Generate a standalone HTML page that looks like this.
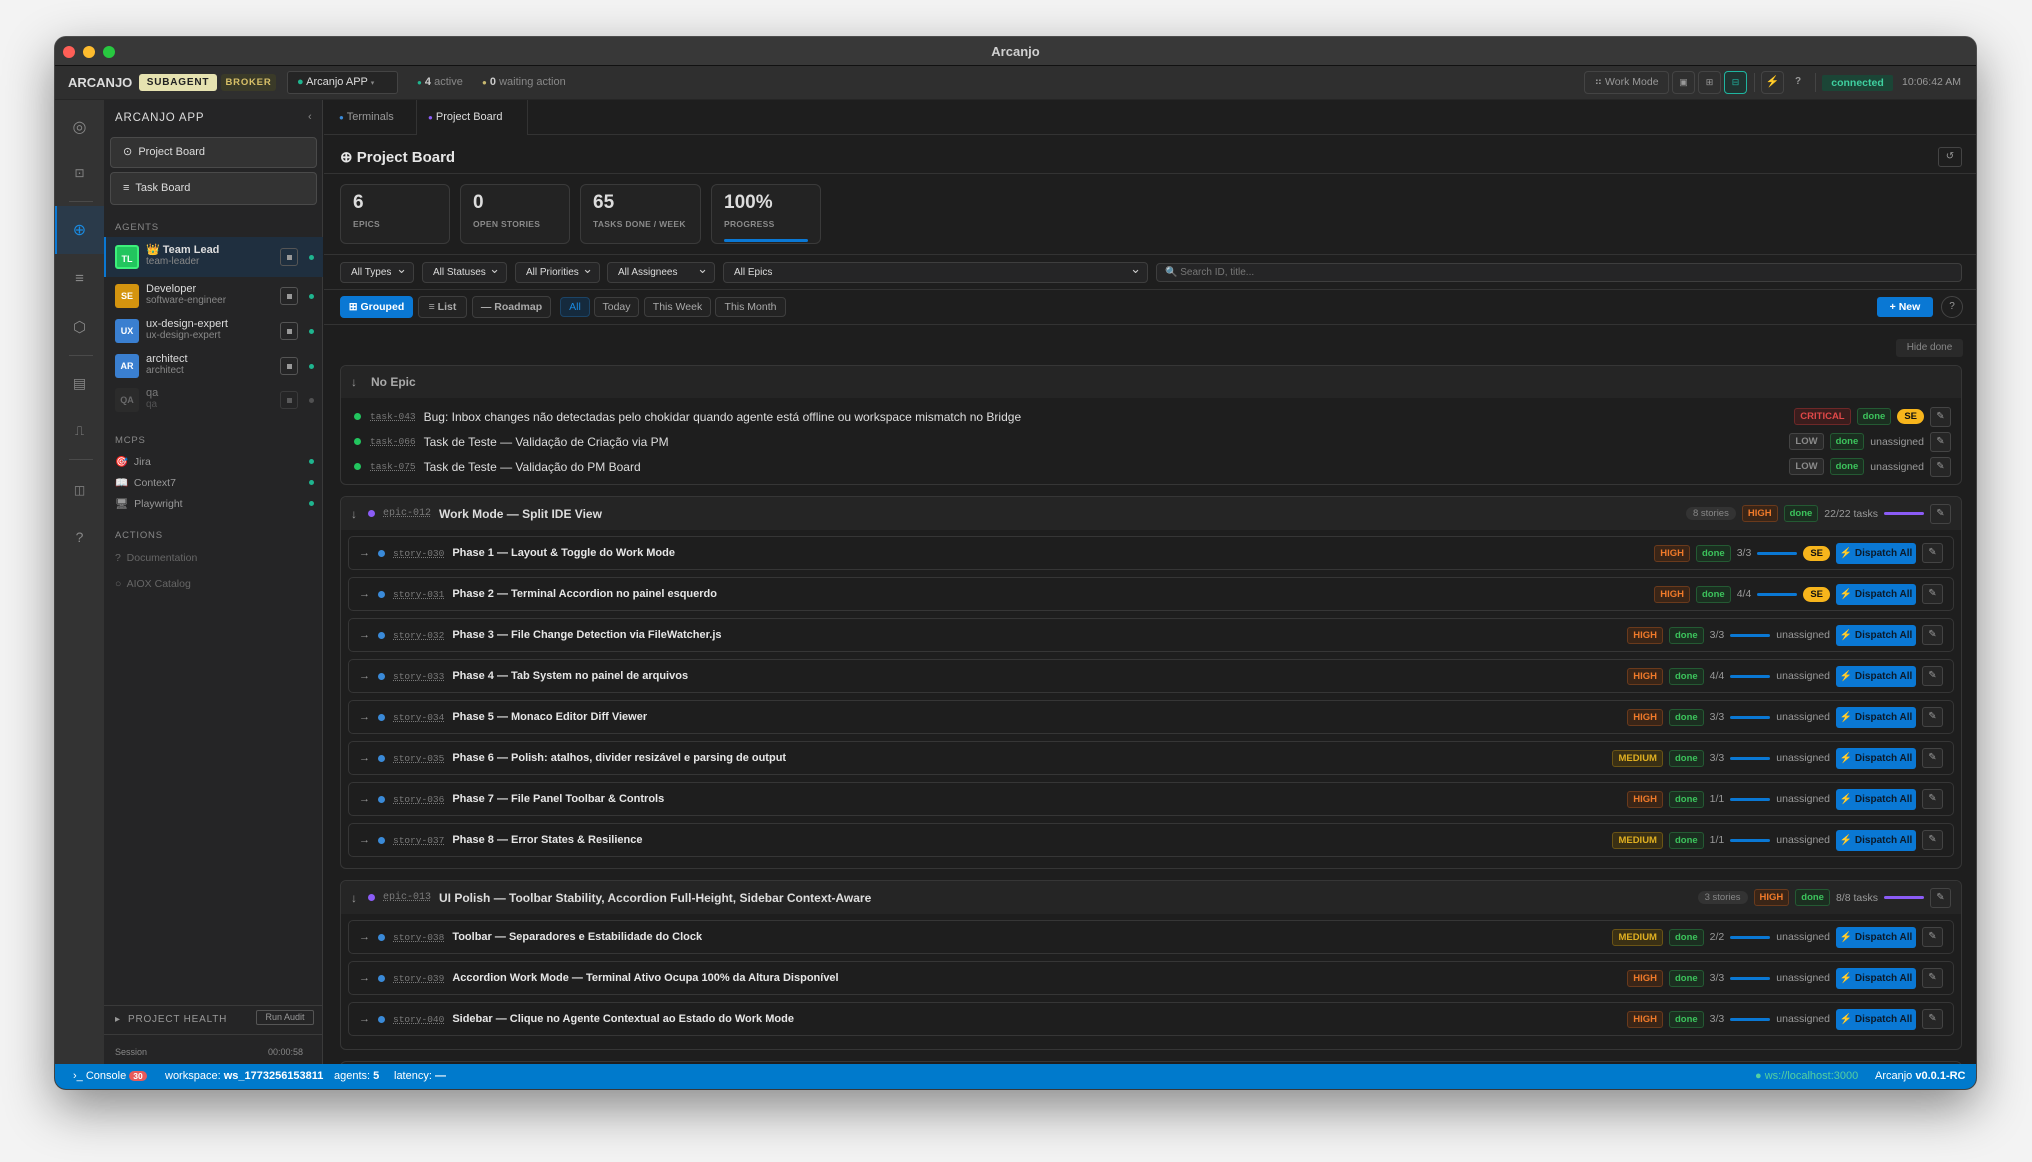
<!DOCTYPE html>
<html><head><meta charset="utf-8"><style>
*{box-sizing:border-box;margin:0;padding:0}
body{width:2032px;height:1162px;background:#f3f3f3;font-family:"Liberation Sans",sans-serif;position:relative;overflow:hidden;color:#ccc}
.win{position:absolute;left:55px;top:37px;width:1921px;height:1052px;border-radius:11px;overflow:hidden;background:#1e1e1e;box-shadow:0 18px 50px rgba(0,0,0,.45),0 0 0 1px #555}
.abs{position:absolute}
.title{left:0;top:0;width:100%;height:29px;background:#383838;border-bottom:1px solid #111;text-align:center;font-size:13px;font-weight:bold;line-height:29px;color:#d0d0d0}
.tl{position:absolute;top:9px;width:12px;height:12px;border-radius:50%}
.tb{left:0;top:29px;width:100%;height:34px;background:#2f2f2f;border-bottom:1px solid #262626;font-size:11px}
.rail{left:0;top:63px;width:49px;height:964px;background:#333}
.side{left:49px;top:63px;width:219px;height:964px;background:#252526;border-right:1px solid #3a3a3a}
.main{left:269px;top:63px;width:1652px;height:964px;background:#1e1e1e;overflow:hidden}
.status{left:0;top:1027px;width:100%;height:25px;background:#007acc;color:#fff;font-size:11px}
.pill{display:inline-block;border-radius:3px;font-size:9.5px;font-weight:bold;padding:0 5px;line-height:15px;border:1px solid}
.hi{color:#f07a2a;border-color:#6a3a1c;background:#3a2517}
.med{color:#e0b021;border-color:#6a5415;background:#3a3014}
.crit{color:#e04848;border-color:#6e2828;background:#3a1d1d}
.low{color:#8a8a8a;border-color:#444;background:#2a2a2a}
.done{color:#3cc35c;border-color:#245a33;background:#1b2e20}
.se{display:inline-block;background:#f7b51c;color:#111;border-radius:8px;font-size:9.5px;font-weight:bold;padding:0 7px;line-height:15px}
.ed{display:inline-block;width:21px;height:20px;border:1px solid #444;border-radius:3px;text-align:center;font-size:10px;line-height:18px;color:#999;background:#262626}
.disp{display:inline-block;width:80px;height:21px;background:#0a78d4;color:#0b1a2a;border-radius:3px;font-size:10px;font-weight:bold;line-height:21px;text-align:center}
.bar{display:inline-block;width:40px;height:3px;border-radius:2px;background:#0a78d4;vertical-align:middle}
.group{position:absolute;left:16px;width:1622px;border:1px solid #363636;border-radius:6px;background:#1e1e1e;overflow:hidden}
.gh{height:33px;background:#252525;display:flex;align-items:center;font-size:12px;font-weight:bold;color:#ddd;padding-left:10px}
.story{margin:6px 7px 7px 7px;height:34px;border:1px solid #363636;border-radius:5px;display:flex;align-items:center;font-size:11px;padding-left:10px}
.story+.story{margin-top:0}
.id{color:#7a7a7a;text-decoration:underline dotted;font-family:"Liberation Mono",monospace;font-size:9.5px;margin-right:8px;font-weight:normal}
.dot{display:inline-block;width:7px;height:7px;border-radius:50%;margin-right:8px}
.r{margin-left:auto;display:flex;align-items:center;gap:6px;padding-right:10px;font-size:10.5px;color:#9a9a9a;font-weight:normal}
.st{font-weight:bold;color:#e6e6e6}
.sel{position:absolute;top:162px;height:21px;border:1px solid #3e3e3e;border-radius:4px;background:#252526;font-size:10px;color:#ddd;line-height:19px;padding-left:10px}
.sel:after{content:"⌄";position:absolute;right:6px;top:-4px;font-size:13px;color:#ccc}
.vb{position:absolute;top:196px;height:22px;border:1px solid #3e3e3e;border-radius:4px;font-size:10.5px;color:#aaa;line-height:20px;text-align:center;background:#232323}
.card{position:absolute;top:84px;height:60px;border:1px solid #3a3a3a;border-radius:6px;background:#232323;padding:7px 12px}
.card b{display:block;font-size:19px;color:#ddd;line-height:22px}
.card span{font-size:8.5px;font-weight:bold;color:#8a8a8a;letter-spacing:.3px}
.ric{position:absolute;left:0;width:49px;text-align:center;color:#888;font-size:13px}
.ag{position:absolute;left:0;width:219px;height:34px}
.av{position:absolute;left:11px;top:5px;width:24px;height:24px;border-radius:3px;color:#fff;font-size:9px;font-weight:bold;text-align:center;line-height:24px}
.an{position:absolute;left:42px;top:4px;font-size:11px;color:#ddd}
.as{position:absolute;left:42px;top:16px;font-size:10px;color:#888}
.sb{position:absolute;left:176px;top:8px;width:18px;height:18px;border:1px solid #555;border-radius:3px}
.sb:after{content:"";position:absolute;left:6px;top:6px;width:5px;height:5px;background:#999}
.gd{position:absolute;left:205px;top:15px;width:5px;height:5px;border-radius:50%;background:#1fb58f}
.trow{height:25px;display:flex;align-items:center;font-size:12px;padding-left:13px;color:#ddd}
</style></head><body>
<div class="win">
<div class="abs title">Arcanjo
<span class="tl" style="left:8px;background:#ff5f57"></span><span class="tl" style="left:28px;background:#febc2e"></span><span class="tl" style="left:48px;background:#28c840"></span></div>

<div class="abs tb">
<span class="abs" style="left:13px;top:9px;font-size:13px;font-weight:bold;color:#ddd">ARCANJO</span>
<span class="abs" style="left:84px;top:8px;width:78px;height:17px;background:#e6e2b0;color:#222;border-radius:3px;font-size:10px;font-weight:bold;text-align:center;line-height:17px;letter-spacing:.8px">SUBAGENT</span>
<span class="abs" style="left:166px;top:8px;width:55px;height:17px;background:#3a3a28;color:#d8c068;border-radius:3px;font-size:9.5px;font-weight:bold;text-align:center;line-height:17px;letter-spacing:.8px">BROKER</span>
<span class="abs" style="left:232px;top:5px;width:111px;height:23px;border:1px solid #444;background:#252525;border-radius:3px;font-size:11px;color:#ddd;line-height:21px;padding-left:9px"><span style="color:#1fb58f">●</span> Arcanjo APP <span style="font-size:7px;color:#888">▾</span></span>
<span class="abs" style="left:362px;top:10px;color:#888"><span style="color:#1fb58f;font-size:8px">●</span> <b style="color:#ccc">4</b> active</span>
<span class="abs" style="left:427px;top:10px;color:#888"><span style="color:#c8b870;font-size:8px">●</span> <b style="color:#ccc">0</b> waiting action</span>
<span class="abs" style="left:1529px;top:5px;width:85px;height:23px;border:1px solid #444;border-radius:4px;font-size:10.5px;color:#999;line-height:21px;text-align:center">⠶ Work Mode</span>
<span class="abs" style="left:1617px;top:5px;width:23px;height:23px;border:1px solid #444;border-radius:4px;color:#999;font-size:9px;text-align:center;line-height:21px">▣</span>
<span class="abs" style="left:1643px;top:5px;width:23px;height:23px;border:1px solid #444;border-radius:4px;color:#999;font-size:9px;text-align:center;line-height:21px">⊞</span>
<span class="abs" style="left:1669px;top:5px;width:23px;height:23px;border:1px solid #1fb5a0;border-radius:4px;color:#1fb5a0;font-size:9px;text-align:center;line-height:21px;background:#203330">⊟</span>
<span class="abs" style="left:1699px;top:7px;width:1px;height:19px;background:#444"></span>
<span class="abs" style="left:1706px;top:5px;width:23px;height:23px;border:1px solid #444;border-radius:4px;color:#f7b51c;font-size:11px;text-align:center;line-height:21px">⚡</span>
<span class="abs" style="left:1740px;top:10px;color:#999;font-size:10px;font-weight:bold">?</span>
<span class="abs" style="left:1760px;top:7px;width:1px;height:19px;background:#444"></span>
<span class="abs" style="left:1767px;top:9px;width:71px;height:16px;background:#1b4536;color:#3fd0a0;font-weight:bold;font-size:10.5px;text-align:center;line-height:16px;border-radius:2px">connected</span>
<span class="abs" style="left:1847px;top:10px;color:#999;font-size:10.5px">10:06:42 AM</span>
</div>

<div class="abs rail">
<div class="ric" style="top:17px;font-size:16px">◎</div>
<div class="ric" style="top:66px;font-size:12px">⊡</div>
<div class="abs" style="left:14px;top:101px;width:24px;height:1px;background:#4a4a4a"></div>
<div class="abs" style="left:0;top:106px;width:49px;height:48px;background:#2a3a4a;border-left:2px solid #0a78d4"></div>
<div class="ric" style="top:120px;color:#1a8ae0;font-size:16px">⊕</div>
<div class="ric" style="top:170px;font-size:15px">≡</div>
<div class="ric" style="top:218px;font-size:15px">⬡</div>
<div class="abs" style="left:14px;top:255px;width:24px;height:1px;background:#4a4a4a"></div>
<div class="ric" style="top:275px;font-size:14px">▤</div>
<div class="ric" style="top:323px;font-size:13px">⎍</div>
<div class="abs" style="left:14px;top:359px;width:24px;height:1px;background:#4a4a4a"></div>
<div class="ric" style="top:383px;font-size:12px">◫</div>
<div class="ric" style="top:429px;font-size:14px">?</div>
</div>

<div class="abs side">
<span class="abs" style="left:11px;top:12px;font-size:11.5px;letter-spacing:.8px;color:#ddd">ARCANJO APP</span>
<span class="abs" style="left:204px;top:11px;color:#888;font-size:11px">‹</span>
<div class="abs" style="left:6px;top:37px;width:207px;height:31px;border:1px solid #4a4a4a;border-radius:4px;background:#333;font-size:11px;color:#ddd;line-height:29px;padding-left:12px">⊙&nbsp; Project Board</div>
<div class="abs" style="left:6px;top:72px;width:207px;height:33px;border:1px solid #4a4a4a;border-radius:4px;background:#333;font-size:11px;color:#ddd;line-height:31px;padding-left:12px">≡&nbsp; Task Board</div>
<span class="abs" style="left:11px;top:122px;font-size:9.5px;letter-spacing:.8px;color:#888">AGENTS</span>
<div class="ag" style="top:137px;height:40px;background:#1f2f3f;border-left:2px solid #0a78d4"><div class="av" style="left:9px;top:8px;background:#22c55e;border:2px solid #3cf07a">TL</div><div class="an" style="left:40px;top:6px;font-weight:bold">👑 Team Lead</div><div class="as" style="left:40px;top:19px">team-leader</div><div class="sb" style="left:174px;top:11px"></div><div class="gd" style="left:203px;top:18px"></div></div>
<div class="ag" style="top:179px"><div class="av" style="background:#d4940f">SE</div><div class="an">Developer</div><div class="as">software-engineer</div><div class="sb"></div><div class="gd"></div></div>
<div class="ag" style="top:214px"><div class="av" style="background:#3a7fd0">UX</div><div class="an">ux-design-expert</div><div class="as">ux-design-expert</div><div class="sb"></div><div class="gd"></div></div>
<div class="ag" style="top:249px"><div class="av" style="background:#3a7fd0">AR</div><div class="an">architect</div><div class="as">architect</div><div class="sb"></div><div class="gd"></div></div>
<div class="ag" style="top:283px;opacity:.45"><div class="av" style="background:#333;color:#bbb">QA</div><div class="an">qa</div><div class="as">qa</div><div class="sb" style="border-color:#555"></div><div class="gd" style="background:#888"></div></div>
<span class="abs" style="left:11px;top:335px;font-size:9.5px;letter-spacing:.8px;color:#888">MCPS</span>
<span class="abs" style="left:11px;top:355px;font-size:10.5px;color:#999">🎯&nbsp; Jira</span><span class="gd" style="top:359px;left:205px;position:absolute"></span>
<span class="abs" style="left:11px;top:376px;font-size:10.5px;color:#999">📖&nbsp; Context7</span><span class="gd" style="top:380px;left:205px;position:absolute"></span>
<span class="abs" style="left:11px;top:397px;font-size:10.5px;color:#999">🖥&nbsp; Playwright</span><span class="gd" style="top:401px;left:205px;position:absolute"></span>
<span class="abs" style="left:11px;top:430px;font-size:9.5px;letter-spacing:.8px;color:#888">ACTIONS</span>
<span class="abs" style="left:11px;top:452px;font-size:10.5px;color:#666">?&nbsp; Documentation</span>
<span class="abs" style="left:11px;top:478px;font-size:10.5px;color:#666">○&nbsp; AIOX Catalog</span>
<div class="abs" style="left:0;top:905px;width:219px;height:1px;background:#3a3a3a"></div>
<span class="abs" style="left:11px;top:914px;font-size:10px;letter-spacing:.8px;color:#999">▸&nbsp; PROJECT HEALTH</span>
<span class="abs" style="left:152px;top:910px;width:58px;height:15px;border:1px solid #555;border-radius:2px;font-size:9px;color:#999;text-align:center;line-height:13px">Run Audit</span>
<div class="abs" style="left:0;top:934px;width:219px;height:1px;background:#3a3a3a"></div>
<span class="abs" style="left:11px;top:947px;font-size:9px;color:#888">Session</span>
<span class="abs" style="left:164px;top:947px;font-size:9px;color:#888">00:00:58</span>
</div>

<div class="abs main">
<div class="abs" style="left:0;top:0;width:1652px;height:35px;border-bottom:1px solid #333;background:#1e1e1e"></div>
<span class="abs" style="left:15px;top:11px;font-size:11px;color:#999"><span style="color:#3a8ad8;font-size:8px">●</span> Terminals</span>
<div class="abs" style="left:92px;top:0;width:1px;height:35px;background:#333"></div>
<div class="abs" style="left:93px;top:0;width:110px;height:36px;background:#1e1e1e"></div>
<span class="abs" style="left:104px;top:11px;font-size:11px;color:#ddd"><span style="color:#8b5cf6;font-size:8px">●</span> Project Board</span>
<div class="abs" style="left:203px;top:0;width:1px;height:35px;background:#333"></div>
<span class="abs" style="left:16px;top:48px;font-size:15px;font-weight:bold;color:#e6e6e6">⊕ Project Board</span>
<span class="abs" style="left:1614px;top:47px;width:24px;height:20px;border:1px solid #444;border-radius:3px;font-size:10px;color:#999;text-align:center;line-height:18px">↺</span>
<div class="abs" style="left:0;top:73px;width:1652px;height:1px;background:#333"></div>
<div class="card" style="left:16px;width:110px"><b>6</b><span>EPICS</span></div>
<div class="card" style="left:136px;width:110px"><b>0</b><span>OPEN STORIES</span></div>
<div class="card" style="left:256px;width:121px"><b>65</b><span>TASKS DONE / WEEK</span></div>
<div class="card" style="left:387px;width:110px"><b>100%</b><span>PROGRESS</span><div style="width:84px;height:3px;background:#0a78d4;margin-top:7px;border-radius:2px"></div></div>
<div class="abs" style="left:0;top:154px;width:1652px;height:1px;background:#333"></div>
<div class="sel" style="left:16px;width:74px">All Types</div>
<div class="sel" style="left:98px;width:85px">All Statuses</div>
<div class="sel" style="left:191px;width:85px">All Priorities</div>
<div class="sel" style="left:283px;width:108px">All Assignees</div>
<div class="sel" style="left:399px;width:425px">All Epics</div>
<div class="abs" style="left:832px;top:163px;width:806px;height:19px;border:1px solid #3e3e3e;border-radius:4px;background:#252526;font-size:10px;color:#777;line-height:17px;padding-left:8px">🔍 Search ID, title...</div>
<div class="abs" style="left:0;top:189px;width:1652px;height:1px;background:#333"></div>
<div class="vb" style="left:16px;width:73px;background:#0a78d4;border-color:#0a78d4;color:#fff;font-weight:bold">⊞ Grouped</div>
<div class="vb" style="left:94px;width:49px;font-weight:bold">≡ List</div>
<div class="vb" style="left:148px;width:79px;font-weight:bold">— Roadmap</div>
<div class="vb" style="left:236px;width:30px;top:197px;height:20px;line-height:18px;color:#1a8ae0;border-color:#1c4466;background:#152a3d">All</div>
<div class="vb" style="left:270px;width:45px;top:197px;height:20px;line-height:18px">Today</div>
<div class="vb" style="left:320px;width:67px;top:197px;height:20px;line-height:18px">This Week</div>
<div class="vb" style="left:391px;width:71px;top:197px;height:20px;line-height:18px">This Month</div>
<div class="abs" style="left:1553px;top:197px;width:56px;height:20px;background:#0a78d4;border-radius:3px;color:#fff;font-size:10.5px;font-weight:bold;text-align:center;line-height:20px">+ New</div>
<div class="abs" style="left:1617px;top:196px;width:22px;height:22px;border:1px solid #444;border-radius:50%;font-size:10px;color:#999;text-align:center;line-height:20px">?</div>
<div class="abs" style="left:0;top:224px;width:1652px;height:1px;background:#333"></div>
<div class="abs" style="left:1572px;top:239px;width:67px;height:18px;background:#2a2a2a;border-radius:3px;font-size:10px;color:#888;text-align:center;line-height:18px">Hide done</div>

<div class="group" style="top:265px;height:120px">
<div class="gh" style="height:32px;font-weight:normal;color:#aaa"><span style="margin-right:14px;color:#999">↓</span><span style="font-weight:bold;color:#aaa">No Epic</span></div>
<div style="height:6px"></div>
<div class="trow"><span class="dot" style="background:#22c55e;margin-right:9px"></span><span class="id">task-043</span>Bug: Inbox changes não detectadas pelo chokidar quando agente está offline ou workspace mismatch no Bridge<div class="r"><span class="pill crit">CRITICAL</span><span class="pill done">done</span><span class="se">SE</span><span class="ed">✎</span></div></div>
<div class="trow"><span class="dot" style="background:#22c55e;margin-right:9px"></span><span class="id">task-066</span>Task de Teste — Validação de Criação via PM<div class="r"><span class="pill low">LOW</span><span class="pill done">done</span><span>unassigned</span><span class="ed">✎</span></div></div>
<div class="trow"><span class="dot" style="background:#22c55e;margin-right:9px"></span><span class="id">task-075</span>Task de Teste — Validação do PM Board<div class="r"><span class="pill low">LOW</span><span class="pill done">done</span><span>unassigned</span><span class="ed">✎</span></div></div>
</div>

<div class="group" style="top:396px;height:373px">
<div class="gh"><span style="margin-right:11px;color:#999;font-weight:normal">↓</span><span class="dot" style="background:#8b5cf6"></span><span class="id" style="font-size:10px">epic-012</span>Work Mode — Split IDE View<div class="r"><span style="background:#333;border-radius:8px;padding:1px 7px;color:#888;font-size:9.5px">8 stories</span><span class="pill hi">HIGH</span><span class="pill done">done</span><span>22/22 tasks</span><span class="bar" style="background:#8b5cf6"></span><span class="ed">✎</span></div></div>
<div class="story"><span style="color:#999;margin-right:8px">→</span><span class="dot" style="background:#3a8ad8"></span><span class="id">story-030</span><span class="st">Phase 1 — Layout &amp; Toggle do Work Mode</span><div class="r"><span class="pill hi">HIGH</span><span class="pill done">done</span><span>3/3</span><span class="bar"></span><span class="se">SE</span><span class="disp">⚡ Dispatch All</span><span class="ed">✎</span></div></div>
<div class="story"><span style="color:#999;margin-right:8px">→</span><span class="dot" style="background:#3a8ad8"></span><span class="id">story-031</span><span class="st">Phase 2 — Terminal Accordion no painel esquerdo</span><div class="r"><span class="pill hi">HIGH</span><span class="pill done">done</span><span>4/4</span><span class="bar"></span><span class="se">SE</span><span class="disp">⚡ Dispatch All</span><span class="ed">✎</span></div></div>
<div class="story"><span style="color:#999;margin-right:8px">→</span><span class="dot" style="background:#3a8ad8"></span><span class="id">story-032</span><span class="st">Phase 3 — File Change Detection via FileWatcher.js</span><div class="r"><span class="pill hi">HIGH</span><span class="pill done">done</span><span>3/3</span><span class="bar"></span><span>unassigned</span><span class="disp">⚡ Dispatch All</span><span class="ed">✎</span></div></div>
<div class="story"><span style="color:#999;margin-right:8px">→</span><span class="dot" style="background:#3a8ad8"></span><span class="id">story-033</span><span class="st">Phase 4 — Tab System no painel de arquivos</span><div class="r"><span class="pill hi">HIGH</span><span class="pill done">done</span><span>4/4</span><span class="bar"></span><span>unassigned</span><span class="disp">⚡ Dispatch All</span><span class="ed">✎</span></div></div>
<div class="story"><span style="color:#999;margin-right:8px">→</span><span class="dot" style="background:#3a8ad8"></span><span class="id">story-034</span><span class="st">Phase 5 — Monaco Editor Diff Viewer</span><div class="r"><span class="pill hi">HIGH</span><span class="pill done">done</span><span>3/3</span><span class="bar"></span><span>unassigned</span><span class="disp">⚡ Dispatch All</span><span class="ed">✎</span></div></div>
<div class="story"><span style="color:#999;margin-right:8px">→</span><span class="dot" style="background:#3a8ad8"></span><span class="id">story-035</span><span class="st">Phase 6 — Polish: atalhos, divider resizável e parsing de output</span><div class="r"><span class="pill med">MEDIUM</span><span class="pill done">done</span><span>3/3</span><span class="bar"></span><span>unassigned</span><span class="disp">⚡ Dispatch All</span><span class="ed">✎</span></div></div>
<div class="story"><span style="color:#999;margin-right:8px">→</span><span class="dot" style="background:#3a8ad8"></span><span class="id">story-036</span><span class="st">Phase 7 — File Panel Toolbar &amp; Controls</span><div class="r"><span class="pill hi">HIGH</span><span class="pill done">done</span><span>1/1</span><span class="bar"></span><span>unassigned</span><span class="disp">⚡ Dispatch All</span><span class="ed">✎</span></div></div>
<div class="story"><span style="color:#999;margin-right:8px">→</span><span class="dot" style="background:#3a8ad8"></span><span class="id">story-037</span><span class="st">Phase 8 — Error States &amp; Resilience</span><div class="r"><span class="pill med">MEDIUM</span><span class="pill done">done</span><span>1/1</span><span class="bar"></span><span>unassigned</span><span class="disp">⚡ Dispatch All</span><span class="ed">✎</span></div></div>
</div>

<div class="group" style="top:780px;height:170px">
<div class="gh"><span style="margin-right:11px;color:#999;font-weight:normal">↓</span><span class="dot" style="background:#8b5cf6"></span><span class="id" style="font-size:10px">epic-013</span>UI Polish — Toolbar Stability, Accordion Full-Height, Sidebar Context-Aware<div class="r"><span style="background:#333;border-radius:8px;padding:1px 7px;color:#888;font-size:9.5px">3 stories</span><span class="pill hi">HIGH</span><span class="pill done">done</span><span>8/8 tasks</span><span class="bar" style="background:#8b5cf6"></span><span class="ed">✎</span></div></div>
<div class="story"><span style="color:#999;margin-right:8px">→</span><span class="dot" style="background:#3a8ad8"></span><span class="id">story-038</span><span class="st">Toolbar — Separadores e Estabilidade do Clock</span><div class="r"><span class="pill med">MEDIUM</span><span class="pill done">done</span><span>2/2</span><span class="bar"></span><span>unassigned</span><span class="disp">⚡ Dispatch All</span><span class="ed">✎</span></div></div>
<div class="story"><span style="color:#999;margin-right:8px">→</span><span class="dot" style="background:#3a8ad8"></span><span class="id">story-039</span><span class="st">Accordion Work Mode — Terminal Ativo Ocupa 100% da Altura Disponível</span><div class="r"><span class="pill hi">HIGH</span><span class="pill done">done</span><span>3/3</span><span class="bar"></span><span>unassigned</span><span class="disp">⚡ Dispatch All</span><span class="ed">✎</span></div></div>
<div class="story"><span style="color:#999;margin-right:8px">→</span><span class="dot" style="background:#3a8ad8"></span><span class="id">story-040</span><span class="st">Sidebar — Clique no Agente Contextual ao Estado do Work Mode</span><div class="r"><span class="pill hi">HIGH</span><span class="pill done">done</span><span>3/3</span><span class="bar"></span><span>unassigned</span><span class="disp">⚡ Dispatch All</span><span class="ed">✎</span></div></div>
</div>
<div class="group" style="top:961px;height:60px"></div>
</div>

<div class="abs status">
<span class="abs" style="left:18px;top:6px">›_ Console <span style="background:#e85a5a;border-radius:7px;padding:0 4px;font-size:8.5px;font-weight:bold">30</span></span>
<span class="abs" style="left:110px;top:6px">workspace: <b>ws_1773256153811</b></span>
<span class="abs" style="left:279px;top:6px">agents: <b>5</b></span>
<span class="abs" style="left:339px;top:6px">latency: <b>—</b></span>
<span class="abs" style="left:1700px;top:6px;color:#55d0a0">● ws://localhost:3000</span>
<span class="abs" style="left:1820px;top:6px">Arcanjo <b>v0.0.1-RC</b></span>
</div>
</div>
</body></html>
